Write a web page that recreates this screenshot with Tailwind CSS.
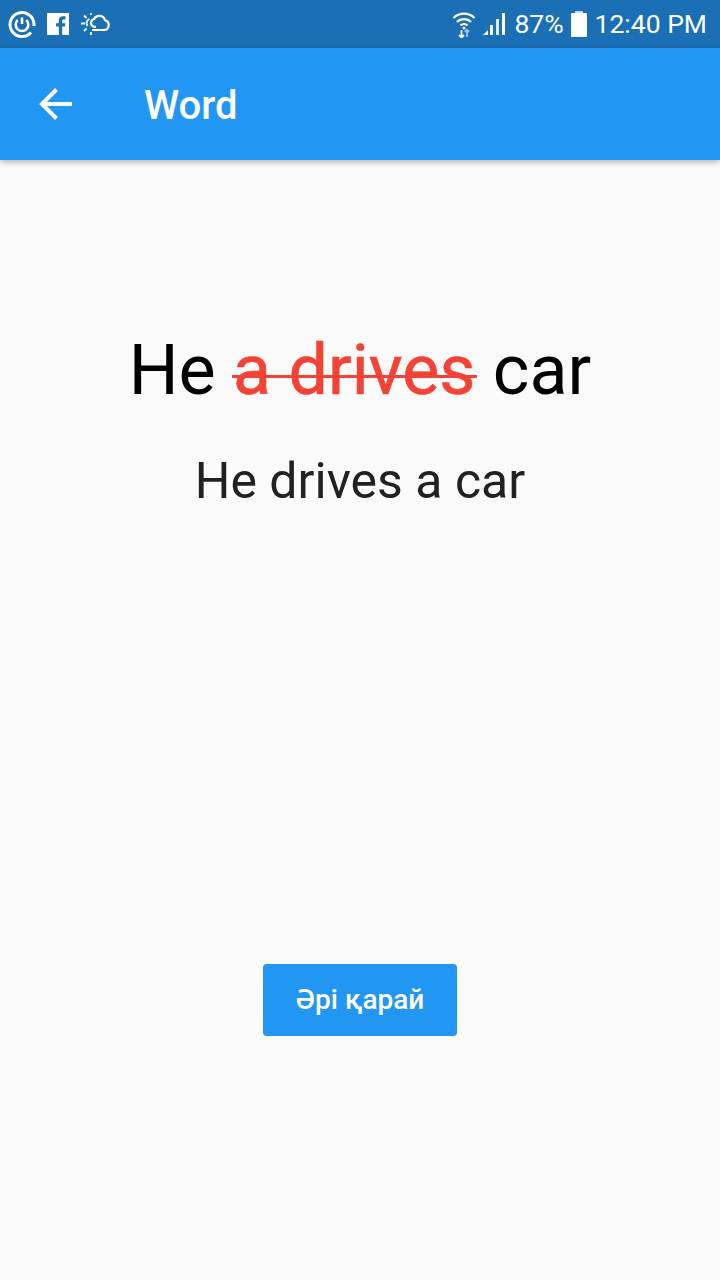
<!DOCTYPE html>
<html lang="en">
<head>
    <meta charset="UTF-8">
    <meta name="viewport" content="width=device-width, initial-scale=1.0">
    <script src="https://cdn.jsdelivr.net/npm/@tailwindcss/browser@4"></script>
    <title>Word</title>
</head>
<body>
    <div class="flex flex-col h-[1280px] w-[720px] overflow-hidden bg-[#fafafa] font-['Roboto',sans-serif]">
        <!-- status bar -->
        <div class="flex items-center justify-between h-12 bg-[#1a6fb5] pl-[8px] pr-[13px] text-white">
            <div class="flex items-center">
                <svg class="w-7 h-7" viewBox="0 0 28 28" fill="none" stroke="#fff">
                    <path d="M23 22.500A12 12 0 1 1 26 14v2" stroke-width="3"/>
                    <path d="M9.800 10a6.300 6.300 0 1 0 8.400 0" stroke-width="2.600"/>
                    <path d="M14 7.500v6.500" stroke-width="2.600"/>
                </svg>
                <svg class="w-[22px] h-[22px] ml-[11px]" viewBox="0 0 22 22">
                    <rect width="22" height="22" fill="#fff"/>
                    <path d="M15.200 22v-8.500h2.800l.4-3.300h-3.200V8c0-1 .3-1.600 1.600-1.600h1.700V3.400c-.3 0-1.300-.1-2.500-.1-2.500 0-4.200 1.500-4.200 4.300v2.600H9v3.300h2.800V22z" fill="#1a6fb5"/>
                </svg>
                <svg class="w-[30px] h-[24px] ml-[11px]" viewBox="0 0 30 24" fill="none" stroke="#fff" stroke-width="2.200">
                    <path d="M12 18h12a5 5 0 0 0 1-9.800 6 6 0 0 0-11-1.200 4 4 0 0 0-2 6.500c1 1.200 2.500 1.500 4 1.200"/>
                    <path d="M5 11.500H1M6.500 6 4 3.500M6.500 16.500 4 19M11 20v3M11 1v2" stroke-width="1.800"/>
                    <path d="M7.500 14a4.500 4.500 0 0 1 2-7" stroke-width="1.800"/>
                </svg>
            </div>
            <div class="flex items-center">
                <svg class="w-[24px] h-[28px] mr-[6px]" viewBox="0 0 24 28" fill="none" stroke="#fff" stroke-width="2.200">
                    <path d="M1.500 8a15 15 0 0 1 21 0M5 12a10 10 0 0 1 14 0M8.500 15.500a5 5 0 0 1 7 0"/>
                    <circle cx="12" cy="18" r="1.500" fill="#fff" stroke="none"/>
                    <path d="M9.500 20v7M7 25l2.500 2.500L12 25" stroke-width="1.800"/>
                    <path d="M15 27v-7M12.800 22l2.200-2.200 2.200 2.200" stroke="#90caf9" stroke-width="1.800"/>
                </svg>
                <svg class="w-[26px] h-[26px] mr-[6px]" viewBox="0 0 26 26" fill="#fff">
                    <path d="M1 24l5-5v5z"/>
                    <rect x="8" y="14" width="3" height="10"/>
                    <rect x="14" y="8" width="3" height="16" opacity=".85"/>
                    <rect x="20" y="2" width="3" height="22"/>
                </svg>
                <span class="text-[26.500px] leading-none">87%</span>
                <svg class="w-[16px] h-[26px] ml-[7px] mr-[8px]" viewBox="0 0 16 26" fill="#fff">
                    <path d="M4 0h8v2H4z" opacity=".75"/>
                    <rect x="0" y="2" width="16" height="24" rx="1"/>
                </svg>
                <span class="text-[26.500px] leading-none">12:40 PM</span>
            </div>
        </div>
        <!-- app bar -->
        <div class="relative z-10 flex items-center h-[112px] bg-[#2196f3] shadow-[0_2px_6px_rgba(0,0,0,0.3)] text-white">
            <svg class="w-12 h-12 ml-8" viewBox="0 0 48 48" fill="none" stroke="#fff" stroke-width="4">
                <path d="M40 24H11M24.500 9.500 10 24l14.500 14.500"/>
            </svg>
            <h1 class="ml-[64px] pt-[4px] text-[40px] font-medium leading-none">Word</h1>
        </div>
        <!-- content -->
        <div class="flex flex-col items-center flex-1">
            <p class="mt-[168px] text-[70px] leading-[84px] text-black">He <span class="relative text-[#f44336] [-webkit-text-stroke:0.6px_#f44336]">a drives<span class="absolute left-[-1px] right-[-2px] top-[46px] h-[3px] bg-[#f44336]"></span></span> car</p>
            <p class="mt-[41px] text-[50px] leading-[56px] text-[#212121]">He drives a car</p>
            <button class="mt-[455px] w-[194px] h-[72px] rounded-[4px] bg-[#2196f3] text-white text-[28px] font-medium">Әрі қарай</button>
        </div>
    </div>
</body>
</html>
